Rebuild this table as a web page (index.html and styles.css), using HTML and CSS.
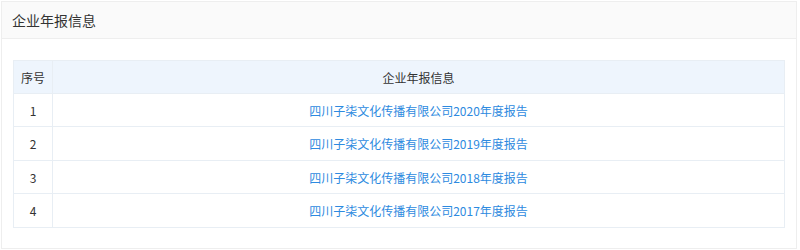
FILE: index.html
```html
<!DOCTYPE html>
<html lang="zh">
<head>
<meta charset="utf-8">
<link rel="stylesheet" href="styles.css">
</head>
<body>
<div class="panel">
  <div class="panel-head">企业年报信息</div>
  <div class="panel-body">
    <table class="report-table">
      <thead>
        <tr><th class="col-no">序号</th><th>企业年报信息</th></tr>
      </thead>
      <tbody>
        <tr><td class="col-no">1</td><td><a href="#">四川子柒文化传播有限公司2020年度报告</a></td></tr>
        <tr><td class="col-no">2</td><td><a href="#">四川子柒文化传播有限公司2019年度报告</a></td></tr>
        <tr><td class="col-no">3</td><td><a href="#">四川子柒文化传播有限公司2018年度报告</a></td></tr>
        <tr><td class="col-no">4</td><td><a href="#">四川子柒文化传播有限公司2017年度报告</a></td></tr>
      </tbody>
    </table>
  </div>
</div>
</body>
</html>
```
FILE: styles.css
```css
html, body {
  margin: 0;
  padding: 0;
  background: #ffffff;
}
body {
  font-family: "Microsoft YaHei", "Noto Sans CJK SC", "Liberation Sans", sans-serif;
  color: #333333;
  padding: 1px 3px 0 1px;
}
.panel {
  border: 1px solid #eeeeee;
  background: #ffffff;
}
.panel-head {
  background: #fafafa;
  border-bottom: 1px solid #eeeeee;
  height: 36px;
  line-height: 36px;
  padding-left: 10px;
  font-size: 14px;
  color: #333333;
}
.panel-body {
  padding: 21px 11px 20px 11px;
}
.report-table {
  width: 100%;
  border-collapse: collapse;
  font-size: 12px;
}
.report-table th,
.report-table td {
  border: 1px solid #e8eef4;
  height: 32px;
  padding: 0;
  text-align: center;
  font-weight: normal;
}
.report-table tbody tr:nth-child(2) td,
.report-table tbody tr:nth-child(4) td {
  height: 33px;
}
.report-table th {
  background: #eef5fd;
  color: #333333;
}
.report-table td {
  color: #333333;
}
.col-no {
  width: 38px;
}
.report-table a {
  color: #2d8ae0;
  text-decoration: none;
}
```
